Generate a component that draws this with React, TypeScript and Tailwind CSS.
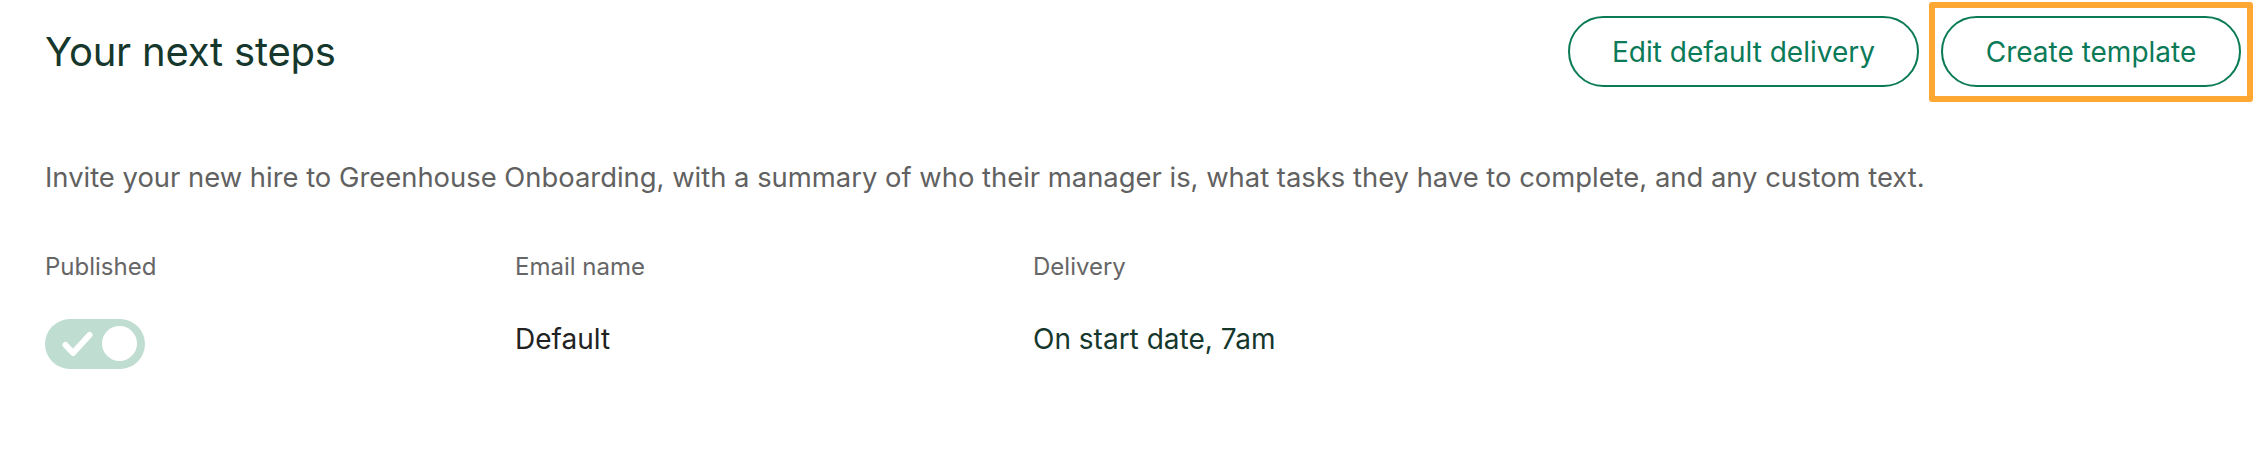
import React from 'react';

const Toggle: React.FC = () => (
  <div className="w-[100px] h-[50px] rounded-full bg-[#c0ddd2] flex items-center justify-between pl-[17px] pr-[8px]">
    <svg width="31" height="26" viewBox="0 0 31 26" fill="none">
      <path d="M3.5 14 L11 22 L27.5 4" stroke="white" strokeWidth="6" strokeLinecap="round" strokeLinejoin="round" />
    </svg>
    <span className="w-[35px] h-[35px] rounded-full bg-white" />
  </div>
);

export default function App() {
  return (
    <div className="w-[2268px] h-[462px] bg-white pl-[45px] pr-[27px] pt-[16px] font-['Inter',sans-serif]">
      <div className="flex items-center justify-between h-[71px]">
        <h2 className="text-[40px] leading-[48px] text-[#15372c] tracking-[-0.2px]">Your next steps</h2>
        <div className="flex items-center gap-[22px]">
          <button className="h-[71px] w-[351px] rounded-full border-2 border-[#0a7a57] text-[#0a7a57] text-[28px]">
            Edit default delivery
          </button>
          <div className="relative">
            <button className="h-[71px] w-[300px] rounded-full border-2 border-[#0a7a57] text-[#0a7a57] text-[28px]">
              Create template
            </button>
            <span className="absolute -left-[12px] -right-[12px] -top-[14px] -bottom-[15px] border-[6px] border-[#ffa733] rounded-[3px] pointer-events-none" />
          </div>
        </div>
      </div>

      <p className="mt-[72px] text-[27.4px] leading-[36px] text-[#616161]">
        Invite your new hire to Greenhouse Onboarding, with a summary of who their manager is, what tasks they have to complete, and any custom text.
      </p>

      <div className="mt-[56px] grid grid-cols-[470px_518px_1fr] text-[24px] leading-[32px] text-[#666666]">
        <span>Published</span>
        <span>Email name</span>
        <span>Delivery</span>
      </div>

      <div className="mt-[35px] grid grid-cols-[470px_518px_1fr] items-center text-[28px]">
        <Toggle />
        <span className="pb-[9px] text-[#222222]">Default</span>
        <span className="pb-[9px] text-[#15372c]">On start date, 7am</span>
      </div>
    </div>
  );
}
